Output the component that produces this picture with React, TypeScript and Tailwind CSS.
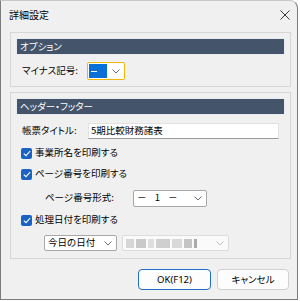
const jp = "font-['Noto_Sans_CJK_JP','Noto_Sans',sans-serif] [font-feature-settings:'palt']";

function Chevron({ light = false }: { light?: boolean }) {
  return (
    <svg width="8" height="5" viewBox="0 0 8 5" className="shrink-0">
      <path d="M0.5 0.5 L4 4 L7.5 0.5" fill="none" stroke={light ? '#b8b8b8' : '#5f5f5f'} strokeWidth="0.9" />
    </svg>
  );
}

function Check({ label }: { label: string }) {
  return (
    <div className="flex items-center gap-[3px] h-[20px]">
      <span className="w-[11px] h-[11px] rounded-[2px] bg-[#1b63c2] flex items-center justify-center">
        <svg width="8" height="7" viewBox="0 0 8 7">
          <path d="M0.8 3.6 L3 5.7 L7.2 1" fill="none" stroke="#fff" strokeWidth="1.1" />
        </svg>
      </span>
      <span className="text-[9.5px] leading-none">{label}</span>
    </div>
  );
}

function Header({ text }: { text: string }) {
  return (
    <div className="h-[17px] w-[269px] bg-[#44546a] border border-[#e8ecf0] flex items-center pl-[3px]">
      <span className="text-white text-[9.5px] leading-none">{text}</span>
    </div>
  );
}

export default function App() {
  return (
    <div className={`w-[300px] h-[301px] bg-white ${jp}`}>
      <div className="w-[298px] h-[300px] bg-[#f0f0f0] border border-[#7c7c7c] border-t-[#c8c8c8] rounded-tr-[8px] text-black">
        <div className="h-[28px] flex items-center justify-between pl-[8px] pr-[7px]">
          <span className="text-[10px] leading-none">詳細設定</span>
          <svg width="10" height="10" viewBox="0 0 10 10">
            <path d="M0.5 0.5 L9.5 9.5 M9.5 0.5 L0.5 9.5" stroke="#222" strokeWidth="0.9" />
          </svg>
        </div>

        <div className="ml-[9px] mt-[3px] w-[281px] h-[55px] border border-[#d6d6d6] pl-[5px] pt-[5px]">
          <Header text="オプション" />
          <div className="mt-[7px] flex items-center pl-[6px] h-[18px]">
            <span className="text-[9.5px] leading-none w-[65px]">マイナス記号:</span>
            <div className="w-[38px] h-[18px] border-[1.5px] border-[#f2b705] rounded-[2px] bg-white flex items-center pl-[1px] pr-[4px] justify-between">
              <span className="w-[18px] h-[14px] bg-[#0a6fd6] flex items-center pl-[2px]">
                <span className="w-[6px] h-px bg-white" />
              </span>
              <Chevron />
            </div>
          </div>
        </div>

        <div className="ml-[9px] mt-[5px] w-[281px] h-[167px] border border-[#d6d6d6] pl-[5px] pt-[5px]">
          <Header text="ヘッダー・フッター" />
          <div className="mt-[8px] flex items-center pl-[6px] h-[16px]">
            <span className="text-[9.5px] leading-none w-[66px]">帳票タイトル:</span>
            <div className="w-[191px] h-[16px] bg-white border border-[#e2e2e2] border-b-[#9a9a9a] flex items-center pl-[2px]">
              <span className="text-[9.5px] leading-none">5期比較財務諸表</span>
            </div>
          </div>
          <div className="mt-[4px] pl-[5px]">
            <Check label="事業所名を印刷する" />
          </div>
          <div className="mt-[1px] pl-[5px]">
            <Check label="ページ番号を印刷する" />
          </div>
          <div className="mt-[6px] flex items-center pl-[29px] h-[16px]">
            <span className="text-[9.5px] leading-none w-[88px]">ページ番号形式:</span>
            <div className="w-[74px] h-[17px] bg-white border border-[#a8a8a8] rounded-[2px] flex items-center justify-between pl-[3px] pr-[4px]">
              <span className="text-[9.5px] leading-none tracking-[3px]">－ 1 －</span>
              <Chevron />
            </div>
          </div>
          <div className="mt-[4px] pl-[5px]">
            <Check label="処理日付を印刷する" />
          </div>
          <div className="mt-[5px] flex items-center gap-[5px] pl-[28px] h-[16px]">
            <div className="w-[73px] h-[16px] bg-white border border-[#a8a8a8] rounded-[2px] flex items-center justify-between pl-[3px] pr-[4px]">
              <span className="text-[9.5px] leading-none">今日の日付</span>
              <Chevron />
            </div>
            <div className="w-[107px] h-[16px] bg-[#fafafa] border border-[#dcdcdc] rounded-[2px] flex items-center justify-between pl-[3px] pr-[4px]">
              <div className="flex items-center gap-[2px] blur-[0.6px]">
                <span className="w-[8px] h-[9px] bg-[#d6d6d6]" />
                <span className="w-[10px] h-[9px] bg-[#c9c9c9]" />
                <span className="w-[6px] h-[9px] bg-[#dedede]" />
                <span className="w-[14px] h-[9px] bg-[#cfcfcf]" />
                <span className="w-[10px] h-[9px] bg-[#d9d9d9]" />
                <span className="w-[8px] h-[9px] bg-[#c4c4c4]" />
                <span className="w-[3px] h-[9px] bg-[#aaaaaa]" />
              </div>
              <Chevron light />
            </div>
          </div>
        </div>

        <div className="mt-[10px] flex justify-end gap-[6px] pr-[8px]">
          <button className="w-[73px] h-[21px] bg-[#fdfdfd] border-[1.5px] border-[#1f6fc5] rounded-[4px] text-[9.5px] leading-none font-['Noto_Sans','Noto_Sans_CJK_JP',sans-serif]">
            OK(F12)
          </button>
          <button className="w-[72px] h-[21px] bg-[#fdfdfd] border border-[#d0d0d0] rounded-[4px] text-[9.5px] leading-none">
            キャンセル
          </button>
        </div>
      </div>
    </div>
  );
}
